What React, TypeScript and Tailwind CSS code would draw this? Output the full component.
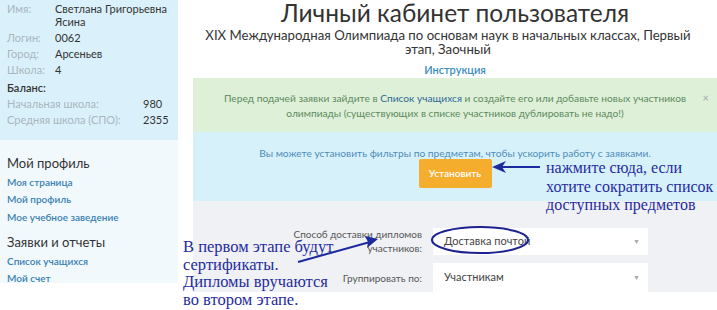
import React from "react";

const font = { fontFamily: "Lato, 'Open Sans', sans-serif" };

const infoRows = [
  { label: "Имя:", value: "Светлана Григорьевна Ясина" },
  { label: "Логин:", value: "0062" },
  { label: "Город:", value: "Арсеньев" },
  { label: "Школа:", value: "4" },
];

const balanceRows = [
  { label: "Начальная школа:", value: "980" },
  { label: "Средняя школа (СПО):", value: "2355" },
];

const Sidebar = () => {
  return (
    <div className="w-[178px] shrink-0 flex flex-col">
      <div className="bg-[#daf1fb] h-[140px] px-[7px] text-[11px] leading-[13px]">
        {infoRows.map((row) => (
          <div key={row.label} className="flex py-[1.5px]">
            <span className="w-[48px] shrink-0 text-[#a9b6bd]">{row.label}</span>
            <span className="text-[#333] w-[112px]">{row.value}</span>
          </div>
        ))}
        <div className="text-[#333] pt-[4px] pb-[1.5px] font-semibold">Баланс:</div>
        {balanceRows.map((row) => (
          <div key={row.label} className="flex py-[1.5px]">
            <span className="w-[136px] shrink-0 text-[#a9b6bd]">{row.label}</span>
            <span className="text-[#333]">{row.value}</span>
          </div>
        ))}
      </div>
      <div className="bg-[#f1f9fd] h-[143px] px-[7px] pt-[14px]">
        <div className="text-[13px] leading-[18px] text-[#333]">Мой профиль</div>
        <div className="flex flex-col mt-[1.5px] text-[10px] leading-[17.5px] text-[#3a7fb0] font-semibold">
          <span>Моя страница</span>
          <span>Мой профиль</span>
          <span>Мое учебное заведение</span>
        </div>
        <div className="text-[13px] leading-[18px] text-[#333] mt-[7px]">Заявки и отчеты</div>
        <div className="flex flex-col mt-[1.5px] text-[10px] leading-[17.5px] text-[#3a7fb0] font-semibold">
          <span>Список учащихся</span>
          <span>Мой счет</span>
        </div>
      </div>
    </div>
  );
};

const SelectBox = ({ value, h }: { value: string; h: string }) => (
  <div className={`w-[215px] ${h} bg-white flex items-center justify-between pl-[11px] pr-[8px] text-[11px] text-[#444]`}>
    <span>{value}</span>
    <span className="text-[7px] text-[#aaa]">▼</span>
  </div>
);

const Main = () => {
  return (
    <div className="flex-1 ml-[15px] flex flex-col">
      <h1 className="text-center text-[24.5px] leading-[26px] text-[#333] whitespace-nowrap">
        Личный кабинет пользователя
      </h1>
      <div className="text-center text-[13.2px] leading-[14px] text-[#333] pl-[2px] pr-[16px] mt-[2px]">
        XIX Международная Олимпиада по основам наук в начальных классах, Первый этап, Заочный
      </div>
      <div className="text-center text-[11px] leading-[14px] text-[#3a8cc0] font-semibold mt-[7px]">
        Инструкция
      </div>
      <div className="relative bg-[#dff0d9] h-[54px] mt-[1px] flex flex-col items-center pt-[13px] text-[10.2px] leading-[15px] text-[#5b8a5b] text-center whitespace-nowrap">
        <span>
          Перед подачей заявки зайдите в <span className="text-[#2d6a94]">Список учащихся</span> и создайте его или добавьте новых участников
        </span>
        <span>олимпиады (существующих в списке участников дублировать не надо!)</span>
        <span className="absolute right-[8px] top-[14px] text-[11px] leading-[11px] text-[#aaa]">×</span>
      </div>
      <div className="bg-[#d7f1fb] h-[69px] flex flex-col items-center pt-[14px]">
        <span className="text-[10.2px] leading-[14px] text-[#4d8cb8] whitespace-nowrap">
          Вы можете установить фильтры по предметам, чтобы ускорить работу с заявками.
        </span>
        <div className="mt-[-1px] w-[73px] h-[29px] bg-[#f5ad2e] rounded-[2px] flex items-center justify-center text-white text-[10px] font-semibold">
          Установить
        </div>
      </div>
      <div className="bg-[#f0f1f5] h-[91px] pt-[26px] flex flex-col gap-[8px]">
        <div className="flex items-center gap-[11px]">
          <div className="w-[229px] text-right text-[10px] leading-[14px] text-[#555]">
            Способ доставки дипломов
            <br />
            участников:
          </div>
          <SelectBox value="Доставка почтой" h="h-[27px]" />
        </div>
        <div className="flex items-center gap-[11px]">
          <div className="w-[229px] text-right text-[10px] leading-[14px] text-[#555]">Группировать по:</div>
          <SelectBox value="Участникам" h="h-[29px]" />
        </div>
      </div>
    </div>
  );
};

const Annotations = () => {
  const serif = { fontFamily: "'Liberation Serif', 'Times New Roman', serif" };
  return (
    <div className="pointer-events-none absolute inset-0">
      <svg className="absolute inset-0" width="717" height="310" viewBox="0 0 717 310">
        <ellipse cx="480" cy="240" rx="48" ry="13" fill="none" stroke="#1c2290" strokeWidth="2" />
        <line x1="540" y1="167" x2="498" y2="167" stroke="#1c2aa0" strokeWidth="2" />
        <polygon points="492,167 506,161 502,167 506,173" fill="#1c2aa0" />
        <line x1="298" y1="262" x2="370" y2="242" stroke="#1c2aa0" strokeWidth="2" />
        <polygon points="378,239 365,236 368,242 367,248" fill="#1c2aa0" />
      </svg>
      <div
        className="absolute left-[546px] top-[159px] text-[16px] leading-[18.5px] text-[#1f2c9e] whitespace-nowrap"
        style={serif}
      >
        нажмите сюда, если
        <br />
        хотите сократить список
        <br />
        доступных предметов
      </div>
      <div
        className="absolute left-[183px] top-[238px] text-[16.5px] leading-[17.7px] text-[#1f2c9e] whitespace-nowrap"
        style={serif}
      >
        В первом этапе будут
        <br />
        сертификаты.
        <br />
        Дипломы вручаются
        <br />
        во втором этапе.
      </div>
    </div>
  );
}

export default function App() {
  return (
    <div className="relative w-[717px] h-[310px] bg-white overflow-hidden flex" style={font}>
      <Sidebar />
      <Main />
      <Annotations />
    </div>
  );
}
